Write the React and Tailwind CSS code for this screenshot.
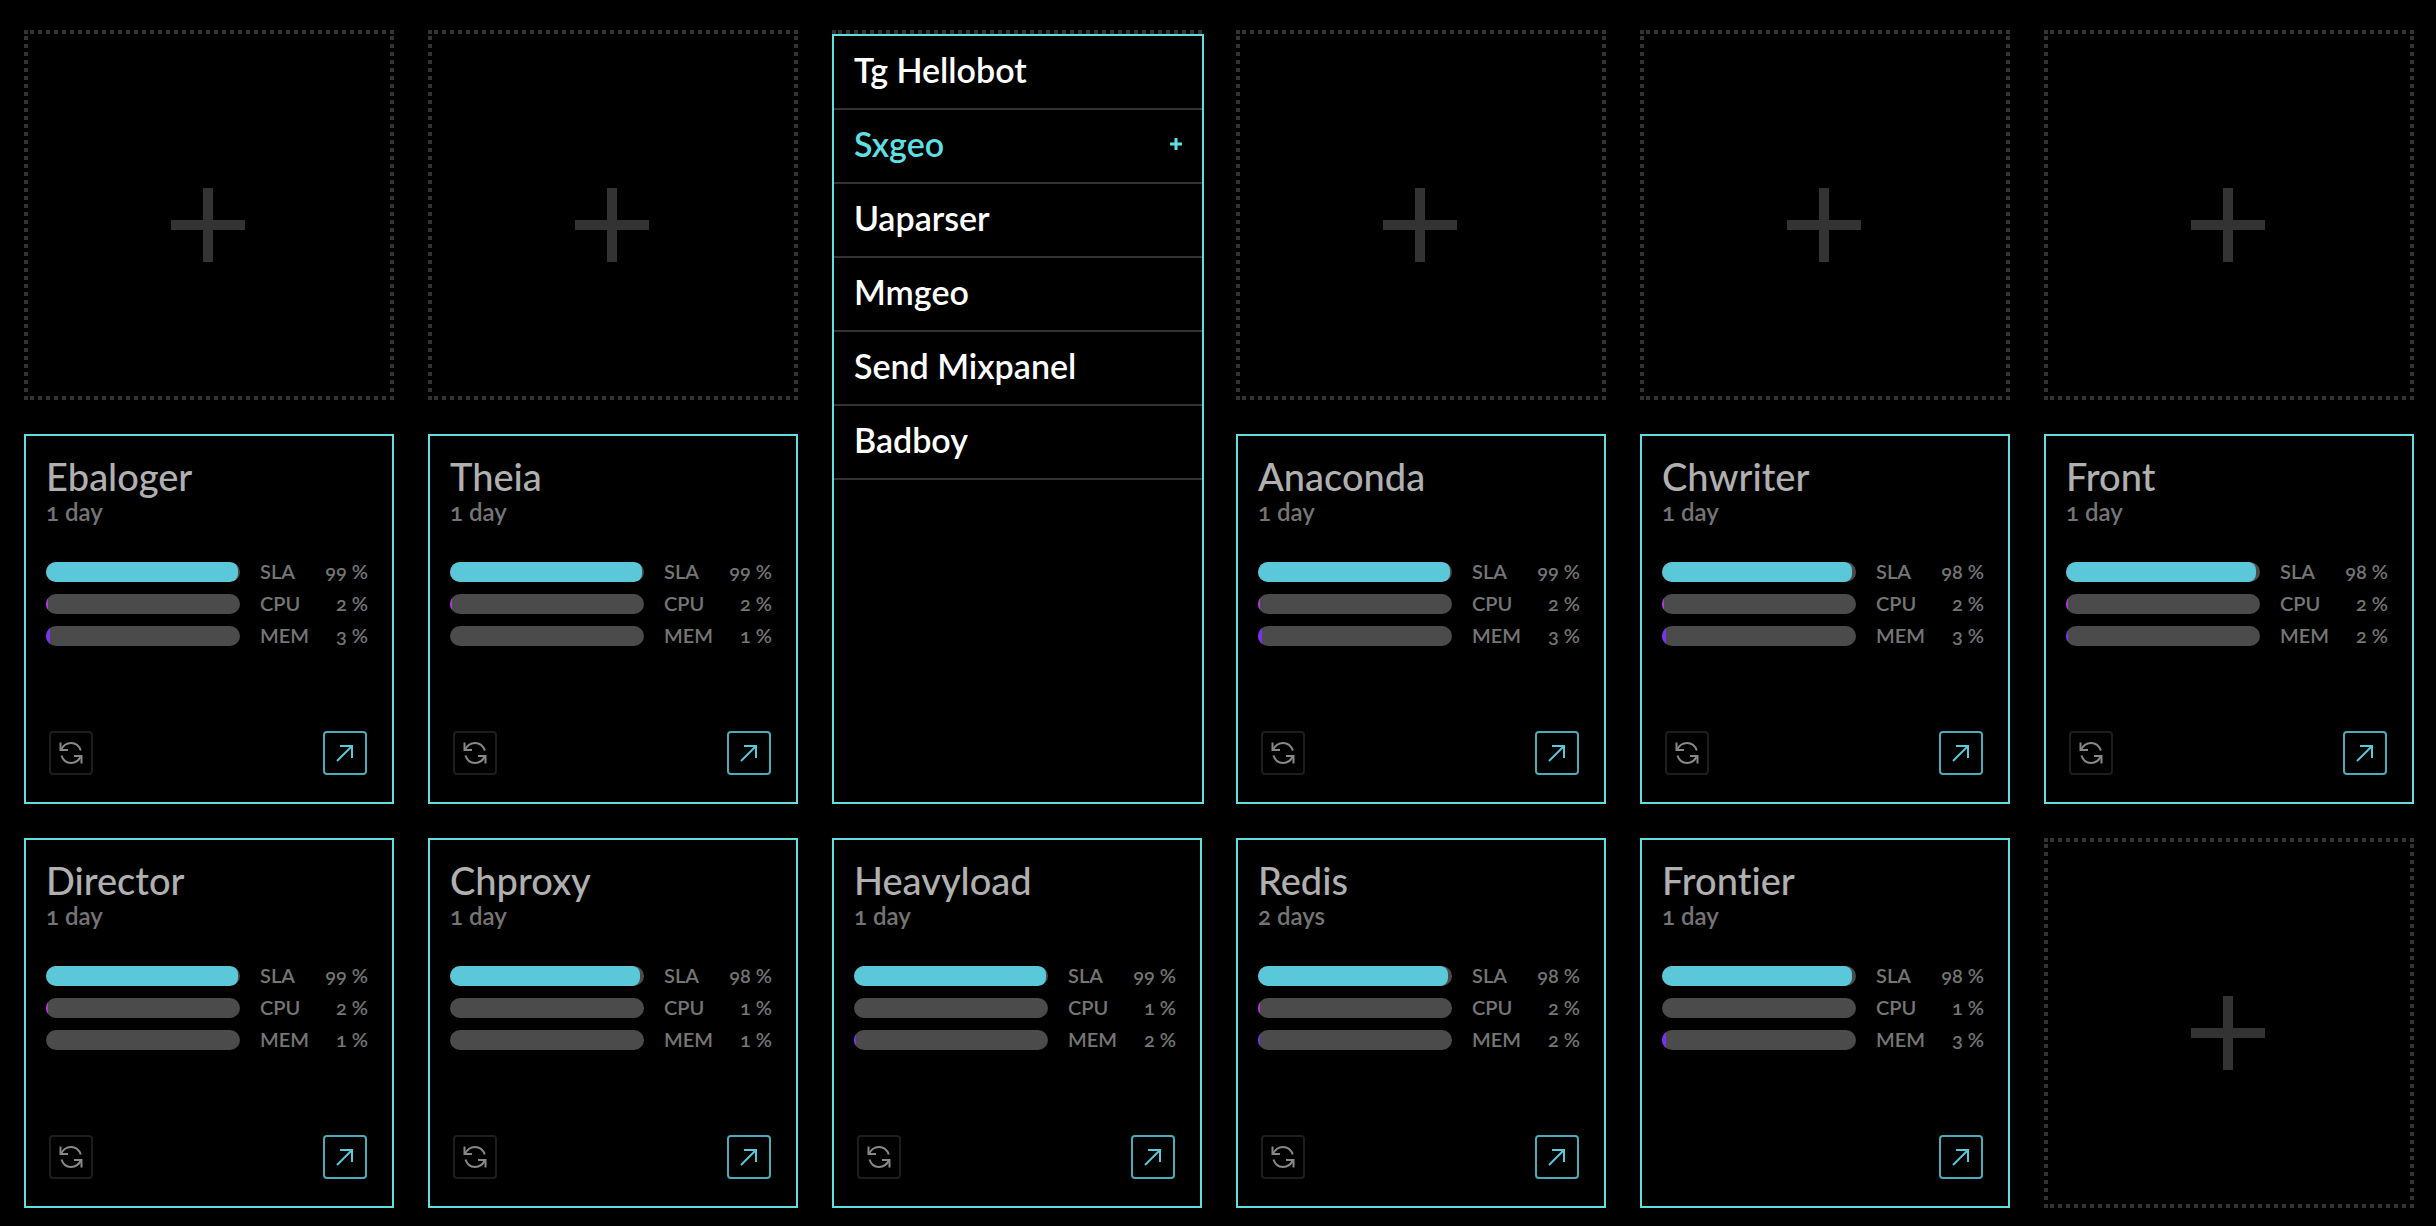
const SERVICES = [
  { slot: true },
  { slot: true },
  { slot: true, menu: true },
  { slot: true },
  { slot: true },
  { slot: true },
  { name: "Ebaloger", uptime: "1 day", sla: 99, cpu: 2, mem: 3, restart: true },
  { name: "Theia", uptime: "1 day", sla: 99, cpu: 2, mem: 1, restart: true },
  { slot: true },
  { name: "Anaconda", uptime: "1 day", sla: 99, cpu: 2, mem: 3, restart: true },
  { name: "Chwriter", uptime: "1 day", sla: 98, cpu: 2, mem: 3, restart: true },
  { name: "Front", uptime: "1 day", sla: 98, cpu: 2, mem: 2, restart: true },
  { name: "Director", uptime: "1 day", sla: 99, cpu: 2, mem: 1, restart: true },
  { name: "Chproxy", uptime: "1 day", sla: 98, cpu: 1, mem: 1, restart: true },
  { name: "Heavyload", uptime: "1 day", sla: 99, cpu: 1, mem: 2, restart: true },
  { name: "Redis", uptime: "2 days", sla: 98, cpu: 2, mem: 2, restart: true },
  { name: "Frontier", uptime: "1 day", sla: 98, cpu: 1, mem: 3, restart: false },
  { slot: true },
];

const MENU_ITEMS = ["Tg Hellobot", "Sxgeo", "Uaparser", "Mmgeo", "Send Mixpanel", "Badboy"];

function RestartIcon() {
  return (
    <svg viewBox="0 0 24 24" className="size-6" fill="none" stroke="currentColor" strokeWidth="2" aria-hidden="true">
      <path d="M1.5 1.5V9H9" />
      <path d="M2 9C4 4.500 8 2 12 2c4.500 0 8 2.500 9.800 7.500" />
      <path d="M22.500 22.500V15H15" />
      <path d="M22 15C20 19.500 16.500 22 12 22 7.500 22 4 19.500 2.500 14.500" />
    </svg>
  );
}

function OpenIcon() {
  return (
    <svg viewBox="0 0 18 18" className="size-[18px]" fill="none" stroke="currentColor" strokeWidth="2" aria-hidden="true">
      <path d="M4 2H16V14" />
      <path d="M16 2L1 17" />
    </svg>
  );
}

function Meter({ label, value, fill }) {
  // Usage bars stay empty until the value passes one percent.
  const width = label === "SLA" ? value : value - 1;
  return (
    <div className="flex h-5 items-center gap-5">
      <div className="h-5 flex-1 overflow-hidden rounded-full bg-[#4b4b4b]">
        <div className={`h-full ${fill}`} style={{ width: `${width}%` }} />
      </div>
      <div className="flex w-[108px] justify-between pb-0.5 text-xl leading-5 font-semibold text-[#757575]">
        <span>{label}</span>
        <span className="oldstyle-nums">{value} %</span>
      </div>
    </div>
  );
}

function ServiceCard({ service }) {
  return (
    <article className="flex aspect-square flex-col border-2 border-[#5fdfe0] pt-5 pr-6 pb-[27px] pl-5">
      <h2 className="text-[38px] leading-10 text-[#b0b0b0]">{service.name}</h2>
      <p className="text-2xl leading-8 font-semibold text-[#757575] oldstyle-nums">{service.uptime}</p>
      <div className="mt-[34px] flex flex-col gap-3">
        <Meter label="SLA" value={service.sla} fill="rounded-r-lg bg-[#5ac8d8]" />
        <Meter label="CPU" value={service.cpu} fill="bg-[#bb35e8]" />
        <Meter label="MEM" value={service.mem} fill="bg-[#7b2ff7]" />
      </div>
      <div className="mt-auto flex pr-px pl-[3px]">
        {service.restart && (
          <button type="button" aria-label={`Restart ${service.name}`} className="flex size-11 items-center justify-center rounded border-2 border-[#1d1d1d] text-[#888888]">
            <RestartIcon />
          </button>
        )}
        <button type="button" aria-label={`Open ${service.name}`} className="ml-auto flex size-11 items-center justify-center rounded border-2 border-[#4cabb8] text-[#5ac8d8]">
          <OpenIcon />
        </button>
      </div>
    </article>
  );
}

function ServiceMenu() {
  return (
    <ul className="absolute top-1 left-0 z-10 h-[770px] w-[372px] border-2 border-[#5fdfe0] bg-black">
      {MENU_ITEMS.map((item) => (
        <li key={item} className="border-b-2 border-[#333333]">
          <button
            type="button"
            className={`flex h-18 w-full items-center justify-between px-5 pb-1 text-left text-[34px] leading-10 font-semibold ${item === "Sxgeo" ? "text-[#5fdfe0]" : "text-white"}`}
          >
            <span>{item}</span>
            {item === "Sxgeo" && (
              <svg viewBox="0 0 12 12" className="size-3" fill="none" stroke="currentColor" strokeWidth="3" aria-hidden="true">
                <path d="M6 0V12M0 6H12" />
              </svg>
            )}
          </button>
        </li>
      ))}
    </ul>
  );
}

const DOTTED =
  "bg-[image:linear-gradient(#333,#333),linear-gradient(90deg,#333_50%,transparent_50%),linear-gradient(90deg,#333_50%,transparent_50%),linear-gradient(#333_50%,transparent_50%),linear-gradient(#333_50%,transparent_50%)] [background-size:4px_4px,8px_4px,8px_4px,4px_8px,4px_8px] [background-position:0_0,6px_0,6px_100%,0_6px,100%_6px] [background-repeat:no-repeat,repeat-x,repeat-x,repeat-y,repeat-y]";

function EmptySlot({ menu }) {
  return (
    <div className="relative aspect-square">
      <button type="button" aria-label="Add service" className={`flex size-full items-center justify-center pt-5 pr-0.5 text-[#333333] ${DOTTED}`}>
        <svg viewBox="0 0 74 74" className="size-[74px]" fill="none" stroke="currentColor" strokeWidth="10" aria-hidden="true">
          <path d="M37 0V74M0 37H74" />
        </svg>
      </button>
      {menu && <ServiceMenu />}
    </div>
  );
}

export default function App() {
  return (
    <main className="min-h-screen bg-black pt-[30px] pr-[22px] pb-[18px] pl-6 font-['Lato',sans-serif] font-medium [font-variant-ligatures:no-common-ligatures]">
      <div className="grid grid-cols-6 gap-[34px]">
        {SERVICES.map((service, index) =>
          service.slot ? <EmptySlot key={index} menu={service.menu} /> : <ServiceCard key={index} service={service} />
        )}
      </div>
    </main>
  );
}
